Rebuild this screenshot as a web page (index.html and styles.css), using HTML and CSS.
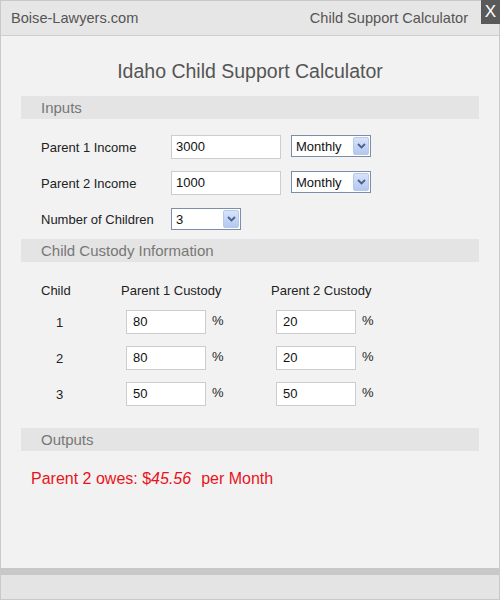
FILE: index.html
```html
<!DOCTYPE html>
<html>
<head>
<meta charset="utf-8">
<link rel="stylesheet" href="styles.css">
</head>
<body>
<div class="window">
  <div class="header">
    <span class="site">Boise-Lawyers.com</span>
    <span class="app">Child Support Calculator</span>
    <span class="close">X</span>
  </div>
  <div class="content">
    <h1 class="title">Idaho Child Support Calculator</h1>
    <div class="section">Inputs</div>
    <div class="inputs">
      <div class="row">
        <span class="label">Parent 1 Income</span>
        <span class="field wide">3000</span>
        <span class="select monthly">Monthly<span class="arrow"><svg width="9" height="6" viewBox="0 0 9 6"><path d="M1 1 L4.5 4.5 L8 1" fill="none" stroke="#4d6185" stroke-width="1.8"/></svg></span></span>
      </div>
      <div class="row">
        <span class="label">Parent 2 Income</span>
        <span class="field wide">1000</span>
        <span class="select monthly">Monthly<span class="arrow"><svg width="9" height="6" viewBox="0 0 9 6"><path d="M1 1 L4.5 4.5 L8 1" fill="none" stroke="#4d6185" stroke-width="1.8"/></svg></span></span>
      </div>
      <div class="row">
        <span class="label">Number of Children</span>
        <span class="select kids">3<span class="arrow"><svg width="9" height="6" viewBox="0 0 9 6"><path d="M1 1 L4.5 4.5 L8 1" fill="none" stroke="#4d6185" stroke-width="1.8"/></svg></span></span>
      </div>
    </div>
    <div class="section">Child Custody Information</div>
    <div class="custody">
      <div class="crow head">
        <span class="c-child">Child</span>
        <span class="c-p1">Parent 1 Custody</span>
        <span class="c-p2">Parent 2 Custody</span>
      </div>
      <div class="crow">
        <span class="c-num">1</span>
        <span class="c-cell"><span class="field pct">80</span><span class="sign">%</span></span>
        <span class="c-cell"><span class="field pct">20</span><span class="sign">%</span></span>
      </div>
      <div class="crow">
        <span class="c-num">2</span>
        <span class="c-cell"><span class="field pct">80</span><span class="sign">%</span></span>
        <span class="c-cell"><span class="field pct">20</span><span class="sign">%</span></span>
      </div>
      <div class="crow last">
        <span class="c-num">3</span>
        <span class="c-cell"><span class="field pct">50</span><span class="sign">%</span></span>
        <span class="c-cell"><span class="field pct">50</span><span class="sign">%</span></span>
      </div>
    </div>
    <div class="section">Outputs</div>
    <div class="result">Parent 2 owes: $<em>45.56</em><span class="per">per Month</span></div>
  </div>
  <div class="band"></div>
  <div class="footer"></div>
</div>
</body>
</html>
```
FILE: styles.css
```css
* { box-sizing: border-box; }
html, body { margin: 0; padding: 0; }
body { font-family: "Liberation Sans", Arial, sans-serif; background: #fff; }
.window {
  width: 500px; height: 600px;
  border: 1px solid #c9c9c9;
  display: flex; flex-direction: column;
  background: #f2f2f2;
}
.header {
  height: 35px; flex: none;
  background: #e6e6e6;
  border-bottom: 1px solid #cfcfcf;
  display: flex; align-items: center;
  padding-left: 10px;
  font-size: 14.6px; color: #555;
  position: relative;
}
.site { flex: 1; }
.app { margin-right: 31px; }
.close {
  position: absolute; right: -1px; top: -1px;
  width: 19px; height: 24px;
  background: #5a5a5a; color: #fff;
  font-size: 17px; line-height: 24px; text-align: center;
}
.content { flex: 1; padding: 0 20px; }
.title {
  margin: 22px 0 12px; font-weight: normal;
  font-size: 19.5px; line-height: 26px; color: #555; text-align: center;
}
.section {
  height: 23px; background: #e4e4e4;
  padding-left: 20px; font-size: 15px; line-height: 23px; color: #777;
}
.inputs { padding: 16px 0 8px 20px; display: flex; flex-direction: column; gap: 12px; }
.row { display: flex; align-items: center; height: 24px; }
.label { width: 130px; font-size: 13px; color: #222; }
.field {
  display: inline-block; background: #fff;
  border: 1px solid #cdcdcd; height: 24px;
  font-size: 13px; line-height: 22px; color: #111; padding-left: 4px;
}
.wide { width: 110px; }
.select {
  display: inline-flex; align-items: center; justify-content: space-between;
  background: #fff; border: 1px solid #7d8fa8; height: 22px;
  font-size: 13px; color: #111; padding: 0 1px 0 4px;
}
.monthly { width: 80px; margin-left: 10px; margin-top: -2px; }
.kids { width: 70px; }
.arrow {
  width: 16px; height: 18px;
  background: linear-gradient(#d6e3fb, #b3c8f1);
  border: 1px solid #b7c8e8; border-radius: 2px;
  display: flex; align-items: center; justify-content: center;
}
.custody { padding: 19px 0 10px 20px; }
.crow { display: flex; align-items: center; height: 24px; margin-bottom: 12px; font-size: 13px; color: #222; }
.crow.head { height: 18px; margin-bottom: 11px; }
.crow.last { margin-bottom: 12px; }
.c-child { width: 80px; }
.c-p1 { width: 150px; }
.c-num { width: 85px; padding-left: 15px; }
.c-cell { width: 150px; display: flex; align-items: center; }
.pct { width: 80px; height: 24px; padding-left: 6px; }
.sign { margin-left: 6px; margin-top: -4px; }
.result { padding: 19px 0 0 10px; font-size: 16px; color: #e8141b; }
.result em { font-style: italic; }
.per { margin-left: 10px; }
.band { height: 7px; background: #c8c8c8; flex: none; }
.footer { height: 24px; background: #e4e4e4; flex: none; }
```
